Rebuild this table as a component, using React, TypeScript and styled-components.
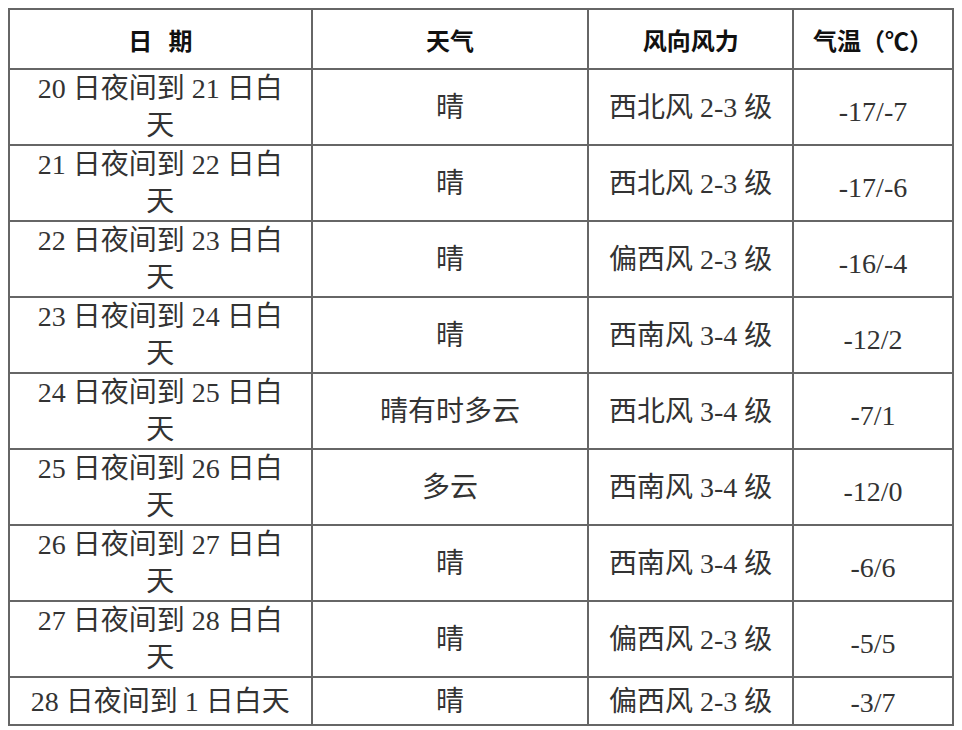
import React from "react";
import styled, { createGlobalStyle } from "styled-components";

const Global = createGlobalStyle`
  html, body { margin: 0; padding: 0; background: #fff; }
  body { padding: 8px; }
`;

const Table = styled.table`
  border-collapse: collapse;
  table-layout: fixed;
  font-family: "Liberation Serif", "Noto Sans CJK SC", serif;
  color: #333;
`;

const HeadCell = styled.th<{ $w: number }>`
  width: ${(p) => p.$w}px;
  height: 58px;
  border: 2px solid #666;
  padding: 0;
  font-family: "Noto Sans CJK SC", "Liberation Sans", sans-serif;
  font-weight: 700;
  font-size: 24px;
  color: #111;
  text-align: center;
  vertical-align: middle;
  white-space: pre;
`;

const Row = styled.tr<{ $h: number }>`
  height: ${(p) => p.$h}px;
`;

const Cell = styled.td<{ $pad?: number; $drop?: number }>`
  border: 2px solid #666;
  padding: ${(p) => p.$drop ?? 0}px ${(p) => p.$pad ?? 4}px 0;
  font-size: 28px;
  line-height: 37px;
  text-align: center;
  vertical-align: middle;
`;

const cols = [
  { label: "日   期", w: 301 },
  { label: "天气", w: 275 },
  { label: "风向风力", w: 203 },
  { label: "气温（℃）", w: 158 },
];

const rows = [
  ["20 日夜间到 21 日白天", "晴", "西北风 2-3 级", "-17/-7"],
  ["21 日夜间到 22 日白天", "晴", "西北风 2-3 级", "-17/-6"],
  ["22 日夜间到 23 日白天", "晴", "偏西风 2-3 级", "-16/-4"],
  ["23 日夜间到 24 日白天", "晴", "西南风 3-4 级", "-12/2"],
  ["24 日夜间到 25 日白天", "晴有时多云", "西北风 3-4 级", "-7/1"],
  ["25 日夜间到 26 日白天", "多云", "西南风 3-4 级", "-12/0"],
  ["26 日夜间到 27 日白天", "晴", "西南风 3-4 级", "-6/6"],
  ["27 日夜间到 28 日白天", "晴", "偏西风 2-3 级", "-5/5"],
  ["28 日夜间到 1 日白天", "晴", "偏西风 2-3 级", "-3/7"],
];

export default function App() {
  return (
    <>
      <Global />
      <Table>
        <thead>
          <tr>
            {cols.map((c) => (
              <HeadCell key={c.label} $w={c.w}>
                {c.label}
              </HeadCell>
            ))}
          </tr>
        </thead>
        <tbody>
          {rows.map((r, i) => {
            const last = i === rows.length - 1;
            return (
              <Row key={i} $h={last ? 48 : 76}>
                <Cell $pad={17}>{r[0]}</Cell>
                <Cell>{r[1]}</Cell>
                <Cell>{r[2]}</Cell>
                <Cell $drop={last ? 2 : 8}>{r[3]}</Cell>
              </Row>
            );
          })}
        </tbody>
      </Table>
    </>
  );
}
